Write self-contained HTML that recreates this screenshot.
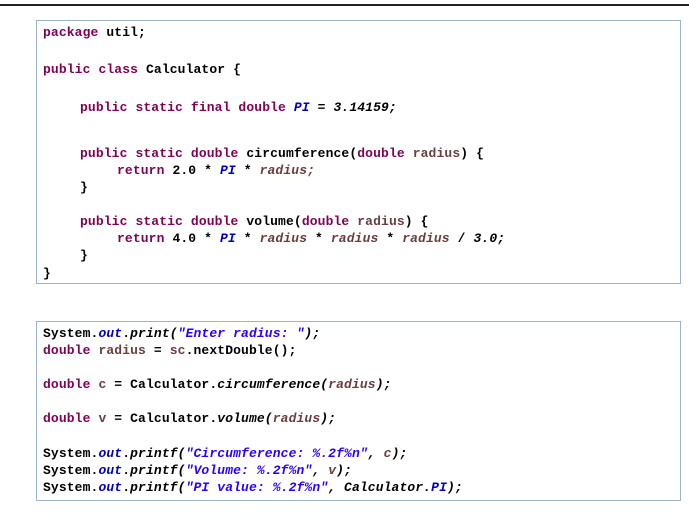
<!DOCTYPE html>
<html><head><style>
body{margin:0;width:689px;height:521px;background:#fff;position:relative;overflow:hidden;font-family:"Liberation Mono",monospace;font-size:13px;font-weight:bold;color:#000;letter-spacing:0.12px}
.top{position:absolute;left:0;top:4px;width:689px;height:2px;background:#222}
.box{position:absolute;border:1px solid #9fb3c8;box-sizing:border-box}
.l{position:absolute;white-space:pre;line-height:15px}
.k{color:#7f0055}.f{color:#0000c0;font-style:italic}.s{color:#2a00ff;font-style:italic}.v{color:#6a3e3e}.i{font-style:italic}.iv{color:#6a3e3e;font-style:italic}
</style></head><body>
<div class="top"></div>
<div class="box" style="left:36px;top:20px;width:645px;height:264px"></div>
<div class="l" style="left:43px;top:25px"><span class="k">package</span> util;</div>
<div class="l" style="left:43px;top:62px"><span class="k">public class</span> Calculator {</div>
<div class="l" style="left:80px;top:100px"><span class="k">public static final double</span> <span class="f">PI</span> = <span class="i">3.14159;</span></div>
<div class="l" style="left:80px;top:146px"><span class="k">public static double</span> circumference(<span class="k">double</span> <span class="v">radius</span>) {</div>
<div class="l" style="left:117px;top:163px"><span class="k">return</span> 2.0 * <span class="f">PI</span> * <span class="iv">radius;</span></div>
<div class="l" style="left:80px;top:180px">}</div>
<div class="l" style="left:80px;top:214px"><span class="k">public static double</span> volume(<span class="k">double</span> <span class="v">radius</span>) {</div>
<div class="l" style="left:117px;top:231px"><span class="k">return</span> 4.0 * <span class="f">PI</span> * <span class="iv">radius</span> * <span class="iv">radius</span> * <span class="iv">radius</span> / <span class="i">3.0;</span></div>
<div class="l" style="left:80px;top:248px">}</div>
<div class="l" style="left:43px;top:266px">}</div>
<div class="box" style="left:36px;top:321px;width:645px;height:180px"></div>
<div class="l" style="left:43px;top:326px">System.<span class="f">out</span>.<span class="i">print(</span><span class="s">"Enter radius: "</span><span class="i">);</span></div>
<div class="l" style="left:43px;top:343px"><span class="k">double</span> <span class="v">radius</span> = <span class="v">sc</span>.nextDouble();</div>
<div class="l" style="left:43px;top:377px"><span class="k">double</span> <span class="v">c</span> = Calculator.<span class="i">circumference(</span><span class="iv">radius</span><span class="i">);</span></div>
<div class="l" style="left:43px;top:411px"><span class="k">double</span> <span class="v">v</span> = Calculator.<span class="i">volume(</span><span class="iv">radius</span><span class="i">);</span></div>
<div class="l" style="left:43px;top:446px">System.<span class="f">out</span>.<span class="i">printf(</span><span class="s">"Circumference: %.2f%n"</span><span class="i">, </span><span class="iv">c</span><span class="i">);</span></div>
<div class="l" style="left:43px;top:463px">System.<span class="f">out</span>.<span class="i">printf(</span><span class="s">"Volume: %.2f%n"</span><span class="i">, </span><span class="iv">v</span><span class="i">);</span></div>
<div class="l" style="left:43px;top:480px">System.<span class="f">out</span>.<span class="i">printf(</span><span class="s">"PI value: %.2f%n"</span><span class="i">, Calculator.</span><span class="f">PI</span><span class="i">);</span></div>
</body></html>
